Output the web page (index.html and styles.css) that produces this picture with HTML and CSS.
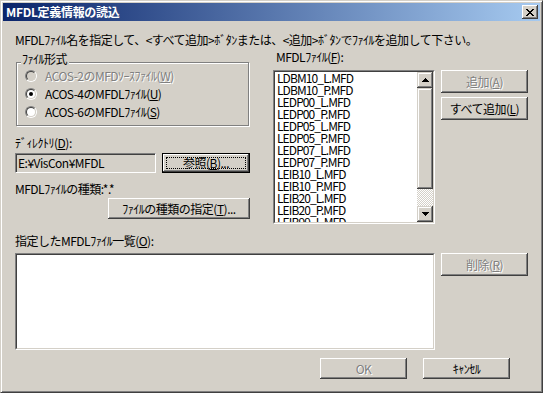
FILE: index.html
```html
<!DOCTYPE html>
<html lang="ja">
<head>
<meta charset="utf-8">
<link rel="stylesheet" href="styles.css">
</head>
<body>
<div class="window">
  <div class="titlebar">
    <span class="title">MFDL定義情報の読込</span>
    <span class="close">
      <svg width="8" height="7" viewBox="0 0 8 7" shape-rendering="crispEdges"><path d="M0 0h2v1h-2zM6 0h2v1h-2zM1 1h2v1h-2zM5 1h2v1h-2zM2 2h4v1h-4zM3 3h2v1h-2zM2 4h4v1h-4zM1 5h2v1h-2zM5 5h2v1h-2zM0 6h2v1h-2zM6 6h2v1h-2z" fill="#000"/></svg>
    </span>
  </div>
  <div class="client">
    <div class="intro">MFDLﾌｧｲﾙ名を指定して、&lt;すべて追加&gt;ﾎﾞﾀﾝまたは、&lt;追加&gt;ﾎﾞﾀﾝでﾌｧｲﾙを追加して下さい。</div>
    <div class="top">
      <div class="left">
        <div class="group">
          <div class="group-title">ﾌｧｲﾙ形式</div>
          <div class="radio disabled"><span class="rb"><span class="rbi"></span></span><span class="lbl">ACOS-2のMFDｿｰｽﾌｧｲﾙ(<u>W</u>)</span></div>
          <div class="radio checked"><span class="rb"><span class="rbi"></span></span><span class="lbl">ACOS-4のMFDLﾌｧｲﾙ(<u>U</u>)</span></div>
          <div class="radio"><span class="rb"><span class="rbi"></span></span><span class="lbl">ACOS-6のMFDLﾌｧｲﾙ(<u>S</u>)</span></div>
        </div>
        <div class="label dir-label">ﾃﾞｨﾚｸﾄﾘ(<u>D</u>):</div>
        <div class="dir-row">
          <div class="edit">E:¥VisCon¥MFDL</div>
          <div class="btn default browse"><span class="focus">参照(<u>B</u>)...</span></div>
        </div>
        <div class="label type-label">MFDLﾌｧｲﾙの種類:*.*</div>
        <div class="btn type-btn">ﾌｧｲﾙの種類の指定(<u>T</u>)...</div>
      </div>
      <div class="mid">
        <div class="label list-label">MFDLﾌｧｲﾙ(<u>F</u>):</div>
        <div class="sunken files">
          <div class="sunken-in">
            <div class="items">
              <div>LDBM10_L.MFD</div>
              <div>LDBM10_P.MFD</div>
              <div>LEDP00_L.MFD</div>
              <div>LEDP00_P.MFD</div>
              <div>LEDP05_L.MFD</div>
              <div>LEDP05_P.MFD</div>
              <div>LEDP07_L.MFD</div>
              <div>LEDP07_P.MFD</div>
              <div>LEIB10_L.MFD</div>
              <div>LEIB10_P.MFD</div>
              <div>LEIB20_L.MFD</div>
              <div>LEIB20_P.MFD</div>
              <div>LEIB99_L.MFD</div>
            </div>
            <div class="vscroll">
              <div class="sb-btn"><svg width="7" height="4" viewBox="0 0 7 4" shape-rendering="crispEdges"><path d="M3 0h1v1h1v1h1v1h1v1H0V3h1V2h1V1h1z" fill="#000"/></svg></div>
              <div class="thumb"></div>
              <div class="track"></div>
              <div class="sb-btn"><svg width="7" height="4" viewBox="0 0 7 4" shape-rendering="crispEdges"><path d="M0 0h7v1h-1v1h-1v1h-1v1h-1V3h-1V2h-1V1H0z" fill="#000"/></svg></div>
            </div>
          </div>
        </div>
      </div>
      <div class="right">
        <div class="btn side-btn disabled">追加(<u>A</u>)</div>
        <div class="btn side-btn add-all">すべて追加(<u>L</u>)</div>
      </div>
    </div>
    <div class="label sel-label">指定したMFDLﾌｧｲﾙ一覧(<u>O</u>):</div>
    <div class="sel-row">
      <div class="sunken selected"><div class="sunken-in"></div></div>
      <div class="btn side-btn disabled del-btn">削除(<u>R</u>)</div>
    </div>
    <div class="footer">
      <div class="btn foot-btn disabled">OK</div>
      <div class="btn foot-btn">ｷｬﾝｾﾙ</div>
    </div>
  </div>
</div>
</body>
</html>
```
FILE: styles.css
```css
* { box-sizing: border-box; }
html, body { margin: 0; padding: 0; }
body {
  width: 543px;
  height: 393px;
  font-family: "Noto Sans CJK JP", "Noto Sans", sans-serif;
  font-size: 12px;
  line-height: 12px;
  letter-spacing: -0.5px;
  color: #000;
  background: #d4d0c8;
  overflow: hidden;
}
u { text-decoration: underline; text-underline-offset: 1px; }

.window {
  width: 543px;
  height: 393px;
  border: 1px solid;
  border-color: #d4d0c8 #404040 #404040 #d4d0c8;
  box-shadow: inset 1px 1px #fff, inset -1px -1px #808080;
  padding: 2px;
  background: #d4d0c8;
  display: flex;
  flex-direction: column;
}

.titlebar {
  height: 18px;
  flex: none;
  background: linear-gradient(to right, #0a246a, #a6caf0);
  display: flex;
  align-items: center;
  padding: 0 2px 0 3px;
  color: #fff;
  font-weight: bold;
}
.title { flex: 1; letter-spacing: -0.3px; }
.close {
  width: 16px;
  height: 14px;
  background: #d4d0c8;
  box-shadow: inset -1px -1px #404040, inset 1px 1px #fff, inset -2px -2px #808080, inset 2px 2px #d4d0c8;
  display: flex;
  align-items: center;
  justify-content: center;
  padding-right: 1px;
}
.close svg { display: block; }

.client {
  flex: 1;
  margin-top: 1px;
  padding: 12px 0 0 12px;
  display: flex;
  flex-direction: column;
}
.intro { height: 12px; white-space: nowrap; }

.top { display: flex; align-items: flex-start; }
.left { width: 235px; display: flex; flex-direction: column; }
.mid { width: 162px; margin-left: 23px; display: flex; flex-direction: column; }
.right { width: 87px; margin-left: 6px; display: flex; flex-direction: column; }

.label { height: 12px; white-space: nowrap; }

/* group box */
.group {
  margin: 16px 0 0 1px;
  width: 233px;
  border: 1px solid #808080;
  box-shadow: inset 1px 1px #fff, 1px 1px #fff;
  padding: 0 0 4px 0;
}
.group-title {
  width: fit-content;
  margin: -10px 0 2px 4px;
  padding: 0 2px 0 1px;
  height: 12px;
  background: #d4d0c8;
}
.radio {
  height: 18px;
  display: flex;
  align-items: center;
  padding-left: 8px;
  gap: 8px;
  white-space: nowrap;
}
.rb {
  width: 12px;
  height: 12px;
  flex: none;
  border-radius: 50%;
  border: 1px solid;
  border-color: #808080 #fff #fff #808080;
}
.rbi {
  display: flex;
  align-items: center;
  justify-content: center;
  width: 10px;
  height: 10px;
  border-radius: 50%;
  border: 1px solid;
  border-color: #404040 #d4d0c8 #d4d0c8 #404040;
  background: #fff;
}
.radio.checked .rbi::after {
  content: "";
  width: 4px;
  height: 4px;
  border-radius: 50%;
  background: #000;
}
.radio.disabled .rbi { background: #d4d0c8; }
.disabled { color: #808080; text-shadow: 1px 1px 0 #fff; }

.dir-label { margin-top: 11px; }
.dir-row { display: flex; margin-top: 4px; gap: 6px; }
.edit {
  width: 141px;
  height: 20px;
  border: 1px solid;
  border-color: #808080 #fff #fff #808080;
  box-shadow: inset 1px 1px #404040, inset -1px -1px #d4d0c8;
  background: #d4d0c8;
  padding: 0 0 0 2px;
  display: flex;
  align-items: center;
  white-space: nowrap;
}

/* buttons */
.btn {
  background: #d4d0c8;
  box-shadow: inset -1px -1px #404040, inset 1px 1px #fff, inset -2px -2px #808080, inset 2px 2px #d4d0c8;
  display: flex;
  align-items: center;
  justify-content: center;
  white-space: nowrap;
}
.btn.default {
  border: 1px solid #000;
  padding: 3px;
}
.focus {
  flex: 1;
  align-self: stretch;
  border: 1px dotted #000;
  display: flex;
  align-items: center;
  justify-content: center;
}
.browse { width: 88px; height: 20px; }
.type-label { margin-top: 10px; }
.type-btn { width: 142px; height: 21px; margin: 3px 0 0 auto; }

.list-label { margin-top: 5px; padding-left: 3px; }

/* sunken listboxes */
.sunken {
  border: 1px solid;
  border-color: #808080 #fff #fff #808080;
}
.sunken-in {
  height: 100%;
  border: 1px solid;
  border-color: #404040 #d4d0c8 #d4d0c8 #404040;
  background: #fff;
  display: flex;
  overflow: hidden;
}
.files { height: 154px; margin-top: 7px; }
.items { flex: 1; padding-left: 2px; overflow: hidden; letter-spacing: -0.9px; }
.items div { height: 12px; line-height: 12px; white-space: nowrap; }
.vscroll { width: 16px; flex: none; display: flex; flex-direction: column; }
.sb-btn, .thumb {
  background: #d4d0c8;
  box-shadow: inset -1px -1px #404040, inset 1px 1px #d4d0c8, inset -2px -2px #808080, inset 2px 2px #fff;
}
.sb-btn {
  height: 16px;
  flex: none;
  display: flex;
  align-items: center;
  justify-content: center;
}
.sb-btn svg { display: block; }
.thumb { height: 101px; flex: none; }
.track {
  flex: 1;
  background: repeating-conic-gradient(#d4d0c8 0 25%, #fff 0 50%) 0 0 / 2px 2px;
}

.side-btn { width: 87px; height: 23px; }
.right .side-btn:first-child { margin-top: 24px; }
.add-all { margin-top: 4px; }

.sel-label { margin-top: 11px; }
.sel-row { display: flex; margin-top: 6px; gap: 6px; align-items: flex-start; }
.selected { width: 420px; height: 97px; }

.footer {
  display: flex;
  justify-content: flex-end;
  gap: 16px;
  margin: 8px 30px 0 0;
}
.foot-btn { width: 87px; height: 21px; }
```
